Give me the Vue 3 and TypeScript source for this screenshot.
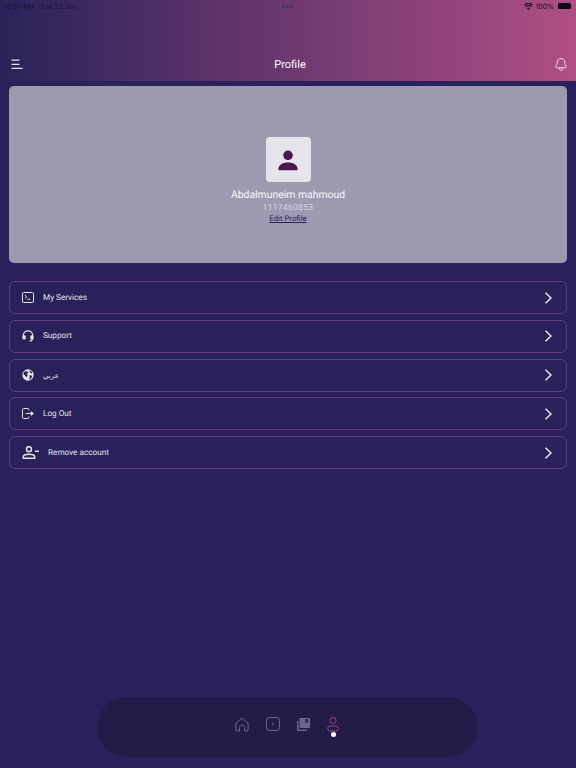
<script setup lang="ts">
const rows = [
  { label: "My Services", icon: "terminal" },
  { label: "Support", icon: "headset" },
  { label: "عربي", icon: "globe" },
  { label: "Log Out", icon: "logout" },
  { label: "Remove account", icon: "remove" },
];
</script>

<template>
  <div class="page">
    <header class="topbar">
      <div class="status">
        <span class="time">12:57 PM</span>
        <span class="date">Tue 25 Jun</span>
        <span class="dots"><i></i><i></i><i></i></span>
        <span class="status-right">
          <svg width="9" height="7" viewBox="0 0 16 12" fill="#111">
            <path d="M8 12 5.400 9a3.600 3.600 0 0 1 5.200 0zM3.900 7.400 2.400 5.700a7.900 7.900 0 0 1 11.200 0l-1.500 1.700a5.700 5.700 0 0 0-8.200 0zM1.300 4.500 0 3a11.300 11.300 0 0 1 16 0l-1.300 1.500a9.400 9.400 0 0 0-13.400 0z" />
          </svg>
          <span>100%</span>
          <span class="battery"></span>
        </span>
      </div>
      <div class="nav-row">
        <svg class="menu-icon" width="12" height="11" viewBox="0 0 12 11" fill="none" stroke="#e6deee" stroke-width="1.200">
          <path d="M0.500 1.200H8.500M0.500 5.300H8.500M0.500 9.400H11.500" />
        </svg>
        <span class="title">Profile</span>
        <svg class="bell" width="12" height="15" viewBox="0 0 12 15" fill="none" stroke="#f6dcec" stroke-width="1">
          <path d="M6 1.500C3.600 1.500 2.300 3.200 2.300 5.200 2.300 7 1.600 8 0.900 9.100 0.400 9.900 0.900 10.800 1.800 10.800H10.200C11.100 10.800 11.600 9.900 11.100 9.100 10.400 8 9.700 7 9.700 5.200 9.700 3.200 8.400 1.500 6 1.500Z" />
          <path d="M4.200 11.200C4.200 13.800 7.800 13.800 7.800 11.200" />
        </svg>
      </div>
    </header>

    <section class="profile-card">
      <div class="avatar">
        <svg width="22" height="22" viewBox="0 0 22 22" fill="#4e1650">
          <circle cx="11" cy="6.300" r="4.800" />
          <path d="M1.400 20.500C1.400 16.200 5 13.500 11 13.500S20.600 16.200 20.600 20.500C20.600 21 20.300 21.200 19.800 21.200H2.200C1.700 21.200 1.400 21 1.400 20.500Z" />
        </svg>
      </div>
      <div class="name">Abdalmuneim mahmoud</div>
      <div class="phone">1117460853</div>
      <div class="edit">Edit Profile</div>
    </section>

    <ul class="rows">
      <li v-for="row in rows" :key="row.label" class="row">
        <svg v-if="row.icon === 'terminal'" class="row-icon" width="12" height="11" viewBox="0 0 12 11" fill="none" stroke="#e6e2ee" stroke-width="1">
          <rect x="0.500" y="0.500" width="11" height="10" rx="1.200" />
          <path d="M3 3.200 4.800 4.800 3 6.400M5.500 7.300H8" />
        </svg>
        <svg v-else-if="row.icon === 'headset'" class="row-icon" width="12" height="12" viewBox="0 0 12 12" fill="none" stroke="#e6e2ee" stroke-width="1.200">
          <path d="M1.300 7V5.400C1.300 2.800 3.300 0.900 6 0.900S10.700 2.800 10.700 5.400V7" />
          <rect x="0.500" y="5.200" width="3.200" height="4.300" rx="1.200" fill="#e6e2ee" stroke="none" />
          <rect x="8.300" y="5.200" width="3.200" height="4.300" rx="1.200" fill="#e6e2ee" stroke="none" />
          <path d="M10.300 9C10.200 10.300 9.100 11.100 7.500 11.100" />
        </svg>
        <svg v-else-if="row.icon === 'globe'" class="row-icon" width="12" height="12" viewBox="0 0 12 12">
          <circle cx="6" cy="6" r="5.700" fill="#e6e2ee" />
          <path d="M2.200 2.700 5 2.200 6.300 3.600 4.900 5 5.700 6.400 4.500 8.300 2.800 6.300 1.300 5.300ZM7.300 1.300 9.800 2.800 10 4.200 8.300 3.900ZM7.500 6.200 10.300 6.700 9 9.800 7.300 10.700 7.700 8.200Z" fill="#2a2259" />
        </svg>
        <svg v-else-if="row.icon === 'logout'" class="row-icon" width="12" height="11" viewBox="0 0 12 11" fill="none" stroke="#e6e2ee" stroke-width="1">
          <path d="M6.800 2.500V1.400C6.800 0.900 6.400 0.500 5.900 0.500H1.400C0.900 0.500 0.500 0.900 0.500 1.400V9.600C0.500 10.100 0.900 10.500 1.400 10.500H5.900C6.400 10.500 6.800 10.100 6.800 9.600V8.500" />
          <path d="M3.800 5.500H10" />
          <path d="M9.200 3.700 11.400 5.500 9.200 7.300Z" fill="#e6e2ee" />
        </svg>
        <svg v-else class="row-icon" width="17" height="13" viewBox="0 0 17 13" fill="none" stroke="#e6e2ee" stroke-width="1.500">
          <circle cx="7" cy="3.200" r="2.500" />
          <path d="M1.300 12.200V10.800C1.300 9.200 3.300 8.300 7 8.300S12.700 9.200 12.700 10.800V12.200Z" />
          <path d="M12.800 5.300H17" />
        </svg>
        <span class="label" :class="{ arabic: row.icon === 'globe' }">{{ row.label }}</span>
        <svg class="chevron" width="8" height="12" viewBox="0 0 8 12" fill="none" stroke="#f0ecf5" stroke-width="1.500">
          <path d="M1.500 0.800 7 6 1.500 11.200" />
        </svg>
      </li>
    </ul>

    <nav class="tabbar">
      <svg class="tab-icon" width="14" height="15" viewBox="0 0 14 15" fill="none" stroke="#6e6490" stroke-width="1">
        <path d="M0.900 6.300 7 1 13.100 6.300V13C13.100 13.600 12.700 14 12.100 14H9.500V10.500C9.500 9.100 8.400 8 7 8S4.500 9.100 4.500 10.500V14H1.900C1.300 14 0.900 13.600 0.900 13Z" />
      </svg>
      <svg class="tab-icon" width="14" height="14" viewBox="0 0 14 14" fill="none" stroke="#6e6490" stroke-width="1">
        <rect x="0.500" y="0.500" width="13" height="13" rx="3" />
        <path d="M7 5.500V8.500" />
      </svg>
      <svg class="tab-icon" width="13" height="13" viewBox="0 0 13 13" fill="#6e6490">
        <path d="M3.500 0H12C12.600 0 13 0.400 13 1V9C13 9.600 12.600 10 12 10H3.500C2.900 10 2.500 9.600 2.500 9V1C2.500 0.400 2.900 0 3.500 0ZM8.500 1V5L9.700 4.200 11 5V1Z" fill-rule="evenodd" />
        <path d="M0 3H1.500V11.500H10V13H1C0.400 13 0 12.600 0 12Z" />
      </svg>
      <div class="tab-active">
        <svg width="12" height="15" viewBox="0 0 12 15" fill="none" stroke="#a5417f" stroke-width="1">
          <circle cx="6" cy="3.500" r="3" />
          <rect x="0.700" y="9" width="10.600" height="5" rx="2.500" />
        </svg>
        <span class="dot"></span>
      </div>
    </nav>
  </div>
</template>

<style scoped>
.page {
  width: 576px;
  height: 768px;
  background: #29225a;
  display: flex;
  flex-direction: column;
  overflow: hidden;
  font-family: Roboto, "Noto Sans", sans-serif;
  text-rendering: geometricPrecision;
}
.topbar {
  height: 81px;
  flex: none;
  background: linear-gradient(90deg, #29225a 0%, #b04f84 100%);
  display: flex;
  flex-direction: column;
}
.status {
  height: 12px;
  padding: 0 5px 0 4px;
  display: flex;
  align-items: center;
  gap: 6px;
  font-family: Inter, sans-serif;
  font-size: 7px;
  color: #15132f;
  position: relative;
}
.dots {
  position: absolute;
  left: 282px;
  top: 5px;
  display: flex;
  gap: 1.500px;
}
.dots i {
  width: 2.500px;
  height: 2.500px;
  border-radius: 50%;
  background: #4b3460;
}
.status-right {
  margin-left: auto;
  display: flex;
  align-items: center;
  gap: 2px;
  color: #1a0f1e;
}
.battery {
  width: 13px;
  height: 6px;
  background: #0c0a14;
  border-radius: 1.500px;
  margin-left: 2px;
}
.nav-row {
  margin-top: 41px;
  padding: 0 9px 0 11px;
  display: flex;
  align-items: center;
  justify-content: space-between;
  position: relative;
  height: 22px;
}
.title {
  position: absolute;
  left: 0;
  right: 0;
  text-align: center;
  font-size: 11px;
  color: #fff;
  padding-left: 4px;
}
.profile-card {
  margin: 5px 9px 0;
  height: 177px;
  flex: none;
  background: #9c99b1;
  border-radius: 5px;
  display: flex;
  flex-direction: column;
  align-items: center;
  padding-top: 51px;
  box-sizing: border-box;
}
.avatar {
  width: 45px;
  height: 45px;
  border-radius: 4px;
  background: #e5e4ea;
  display: flex;
  align-items: center;
  justify-content: center;
}
.name {
  margin-top: 6px;
  font-size: 10.400px;
  line-height: 14px;
  color: #fbfafd;
}
.phone {
  margin-top: 1px;
  font-size: 8.500px;
  line-height: 11px;
  color: #d6d4e2;
  letter-spacing: 0.300px;
}
.edit {
  font-size: 7.800px;
  line-height: 10px;
  color: #2a2259;
  text-decoration: underline;
}
.rows {
  list-style: none;
  margin: 18px 9px 0;
  padding: 0;
  display: flex;
  flex-direction: column;
  gap: 5.750px;
}
.row {
  height: 33px;
  box-sizing: border-box;
  border: 1px solid #653a80;
  border-radius: 6px;
  display: flex;
  align-items: center;
  padding: 0 14px 0 12px;
}
.row-icon {
  flex: none;
  margin-right: 9px;
}
.label {
  font-size: 8.200px;
  color: #e6e2ee;
}
.arabic {
  font-family: "DejaVu Sans", sans-serif;
  font-size: 7px;
  padding-top: 2px;
}
.chevron {
  margin-left: auto;
}
.tabbar {
  margin: auto 98px 11px 97px;
  height: 60px;
  flex: none;
  border-radius: 30px;
  background: #231c49;
  display: flex;
  align-items: center;
  justify-content: center;
  gap: 17px;
  padding: 0 2px 6px 0;
  box-sizing: border-box;
}
.tab-active {
  position: relative;
  display: flex;
}
.dot {
  position: absolute;
  left: 4px;
  top: 15px;
  width: 5px;
  height: 5px;
  border-radius: 50%;
  background: #fff;
}
</style>
